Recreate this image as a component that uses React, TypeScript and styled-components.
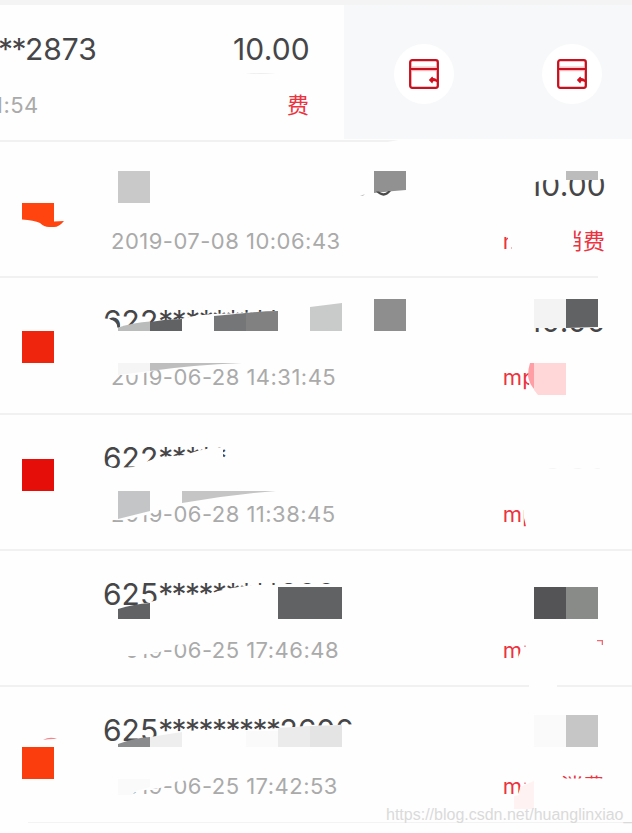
import React from 'react';
import styled, { createGlobalStyle } from 'styled-components';

const GlobalStyle = createGlobalStyle`
  * { box-sizing: border-box; }
  body { margin: 0; background: #fefefe; font-family: Inter, 'Noto Sans CJK SC', sans-serif; }
`;

const Screen = styled.main`
  position: relative;
  width: 632px;
  height: 833px;
  overflow: hidden;
  background: #fefefe;
`;

const TopStrip = styled.div`
  height: 5px;
  background: #f4f4f5;
`;

const Row = styled.section<{ $height: number; $last?: boolean }>`
  position: relative;
  display: flex;
  height: ${(p) => p.$height}px;
  border-bottom: ${(p) => (p.$last ? '1px solid #f3f3f3' : '2px solid #f1f1f1')};
`;

const Details = styled.div<{ $swiped?: boolean }>`
  display: flex;
  flex-direction: column;
  flex: none;
  width: ${(p) => (p.$swiped ? 344 : 632)}px;
  padding: ${(p) => (p.$swiped ? '26px 34px 0 0' : '25px 26px 0 103px')};
`;

const Line = styled.div<{ $secondary?: boolean }>`
  display: flex;
  justify-content: space-between;
  align-items: center;
  height: ${(p) => (p.$secondary ? 30 : 36)}px;
  margin-top: ${(p) => (p.$secondary ? 23 : 0)}px;
  white-space: pre;
`;

const CardNumber = styled.span<{ $swiped?: boolean }>`
  display: flex;
  margin-left: ${(p) => (p.$swiped ? -2 : 0)}px;
  font-size: 30px;
  line-height: 36px;
  color: #464648;
`;

const Digits = styled.span`
  letter-spacing: 0;
`;

const Stars = styled.span`
  letter-spacing: -1.55px;
`;

const Amount = styled.span`
  font-size: 30px;
  line-height: 36px;
  letter-spacing: 0.2px;
  color: #464648;
`;

const Time = styled.time<{ $swiped?: boolean }>`
  margin-left: ${(p) => (p.$swiped ? -6 : 8)}px;
  font-size: 22px;
  line-height: 30px;
  letter-spacing: 0.48px;
  color: #aaaaaa;
`;

const Kind = styled.span`
  margin-right: 1px;
  font-size: 22px;
  line-height: 30px;
  letter-spacing: 0.1px;
  color: #ec3340;
`;

const Actions = styled.div`
  display: flex;
  align-items: center;
  justify-content: space-between;
  width: 288px;
  height: 134px;
  padding: 3px 30px 0 50px;
  background: #f6f8fa;
`;

const ActionButton = styled.button`
  display: grid;
  place-items: center;
  width: 60px;
  height: 60px;
  padding: 0;
  border: 0;
  border-radius: 50%;
  background: #fff;
`;

const Mosaic = styled.svg`
  position: absolute;
  left: 0;
  top: 0;
  width: 632px;
  height: 100%;
  overflow: visible;
`;

const Watermark = styled.div`
  position: absolute;
  left: 386px;
  top: 805px;
  font-family: 'Liberation Sans', Arial, sans-serif;
  font-size: 16px;
  line-height: 20px;
  white-space: nowrap;
  color: #dadada;
`;

const CardIcon = () => (
  <svg width="30" height="30" viewBox="0 0 30 30" fill="none" stroke="#c8101e" strokeWidth="2.3">
    <rect x="1.2" y="1.2" width="27.6" height="27.6" rx="2" />
    <path d="M1 10h28" strokeWidth="2" />
    <path d="M2 8.1h26M2 11.7h26" stroke="#f0a8ae" strokeWidth="1" />
    <path d="M19.8 21l3.4-3.5 1 1.6c2 .2 3.6 1 5 2.8v2c-1.5-1.2-3-1.7-5-1.6l-1 2.2z" fill="#d0101e" stroke="none" />
  </svg>
);

type Piece = [fill: string, d: string];
const W = '#fefefe';
const block = (x: number, y: number, w = 32, h = 32) => `M${x} ${y}h${w}v${h}h${-w}z`;

interface Transaction {
  top: number;
  height: number;
  prefix: string;
  stars: string;
  suffix: string;
  amount: string;
  time: string;
  kind: string;
  pieces: Piece[];
}

const transactions: Transaction[] = [
  {
    top: 142, height: 136, prefix: '', stars: '', suffix: '', amount: '10.00',
    time: '2019-07-08 10:06:43', kind: 'mpos消费',
    pieces: [
      ['#c9c9c9', block(118, 171)],
      ['#919191', 'M374 171h32v19l-12 1-20 2z'],
      ['#4a4a4a', 'M376 191.5Q384 200 391 191l-2.8-.1Q384 195 379 191.6z'],
      ['#c4c4c4', 'M360 196l5-2-2 2z'],
      [W, 'M528 165H610V179L546 180 540 181 528 184z'],
      ['#bcbcbc', block(566, 171, 32, 9)],
      ['#ff440f', 'M22 203h32v18.500l10-.5q-5 6-10 6h-5q-5 0-9-4-6-3-18-3.500z'],
      [W, 'M507 225H573V234L575 242 570 254H512L507 235z'],
      ['#f7b5ba', 'M511 247h1v2h-1z'],
      [W, 'M598 275h34v4h-34z'],
    ],
  },
  {
    top: 278, height: 137, prefix: '622', stars: '*********', suffix: '', amount: '10.00',
    time: '2019-06-28 14:31:45', kind: 'mpos消费',
    pieces: [
      [W, 'M100 319q14-3 18 9l34-6 28-3 14-3 18-2 30-1 50-3h40v30H100z'],
      ['#4a4a4a', 'M112 318q8 1 8 9l-2 1q-1-6-6-8z'],
      ['#babcbc', 'M118 327.500q16-5 32-6V331h-32z'],
      ['#616264', 'M150 322q16-3 32-3v12h-32z'],
      ['#757678', 'M214 316l32-3v18h-32z'],
      ['#818181', 'M246 313q16-2 32-2v20h-32z'],
      ['#c9caca', 'M310 307l32-4v28h-32z'],
      ['#8e8e8e', block(374, 299)],
      [W, 'M525 299h82v29h-82z'],
      ['#f3f3f3', 'M534 299h32v29h-32z'],
      ['#616264', 'M566 299h32v28l-32 1z'],
      ['#ef260d', block(22, 331)],
      [W, 'M108 363h55v6l-14 3-13 3h-28z'],
      ['#f5f5f5', 'M118 363h32v8l-32 4z'],
      ['#bebebe', 'M150 363h92q-50 2-92 8z'],
      [W, 'M530 361h78v36h-76l-3-9z'],
      ['#ff9ea4', 'M530 363h4v26q-5-6-6-13 0-7 2-13z'],
      ['#ffd7d8', 'M534 363h32v32h-28l-4-5z'],
    ],
  },
  {
    top: 415, height: 136, prefix: '622', stars: '*****', suffix: '', amount: '10.00',
    time: '2019-06-28 11:38:45', kind: 'mpos消费',
    pieces: [
      [W, 'M102 464l11 4 20-1 10-4 16-6 26-2 12-4 14-3 12-1v25H102z'],
      [W, block(528, 442, 80, 31)],
      ['#f5f5f5', 'M548 468q5 2 9 0M573 468q5 2 9 0M594 468q4 2 7 0'],
      ['#e50e08', block(22, 459)],
      [W, 'M108 491h54v18l-12 5-16 4-10 2h-16z'],
      ['#c4c5c7', 'M118 491h32v20l-32 8z'],
      ['#c5c5c5', 'M182 491h94q-48 4-94 12z'],
      [W, 'M523 500l1 18 2 8h82v-30z'],
    ],
  },
  {
    top: 551, height: 136, prefix: '625', stars: '*********', suffix: '200', amount: '10.00',
    time: '2019-06-25 17:46:48', kind: 'mpos消费',
    pieces: [
      [W, 'M118 609l28-6 12-3 6-4 46-2 8-3 14-3 20-3h30V584H342V618H118z'],
      ['#616264', 'M118 609q16-5 32-6v16h-32z'],
      ['#616264', block(278, 587, 64, 32)],
      [W, block(528, 575, 82, 45)],
      ['#545456', block(534, 587)],
      ['#898b89', block(566, 587)],
      [W, 'M108 638h90l-8 6-16 1-8 4-6 3-15 2-5 2h-12v4h-20z'],
      [W, 'M521 638H608V664H520L518 657 521 651z'],
      ['#ed6b75', 'M597 640h6v5h-1.300v-3.700h-4.700z'],
      ['#f3a0a7', 'M524 645.500h2v1.500h-2z'],
      [W, 'M529 684h28v5h-28z'],
    ],
  },
  {
    top: 687, height: 136, prefix: '625', stars: '*********', suffix: '2600', amount: '',
    time: '2019-06-25 17:42:53', kind: 'mpos消费',
    pieces: [
      [W, 'M118 747l26-6 12-4 8-5 40-2h50l24-2 32-2 50-2v24H118z'],
      ['#8a8b8d', 'M118 744q16-6 32-7v10h-32z'],
      ['#eeeeee', 'M150 737l32-5v15h-32z'],
      ['#fafafa', block(246, 731, 32, 16)],
      ['#ebebeb', 'M278 728l32-2v21h-32z'],
      ['#e4e4e4', 'M310 726l32-1v22h-32z'],
      ['#f4838b', 'M43 740q7-4 14-1-7-.5-14 1z'],
      ['#fb3d0d', block(22, 747)],
      ['#fafafa', block(534, 715)],
      ['#c6c6c6', block(566, 715)],
      [W, 'M108 772h90l-8 8-16 2-8 4-6 2-15 2-5 2h-7v4h-25z'],
      ['#fafafa', 'M118 779h32v8l-14 4-4 4h-14z'],
      [W, 'M521 787V772H560V778.500H608V802H520L518 794z'],
      ['#fff2f2', 'M520 787l14-6v28h-20v-13l5-1z'],
      ['#f3a0a7', 'M524 782.500h2v1.500h-2z'],
      [W, block(0, 820, 28, 4)],
    ],
  },
];

export default function App() {
  return (
    <>
      <GlobalStyle />
      <Screen>
        <TopStrip />
        <Row $height={137}>
          <Details $swiped>
            <Line>
              <CardNumber $swiped><Stars>**</Stars><Digits>2873</Digits></CardNumber>
              <Amount>10.00</Amount>
            </Line>
            <Line $secondary>
              <Time $swiped>1:54</Time>
              <Kind>费</Kind>
            </Line>
          </Details>
          <Actions>
            <ActionButton aria-label="card"><CardIcon /></ActionButton>
            <ActionButton aria-label="card"><CardIcon /></ActionButton>
          </Actions>
          <Mosaic viewBox="0 5 632 137" preserveAspectRatio="xMinYMin slice">
            <path d="M246 74q14-2 30 0z" fill="#eeeeee" />
            <path d="M404 139H632V143H382z" fill={W} />
          </Mosaic>
        </Row>
        {transactions.map((t, i) => (
          <Row key={t.top} $height={t.height} $last={i === transactions.length - 1}>
            <Details>
              <Line>
                <CardNumber>
                  <Digits>{t.prefix}</Digits>
                  <Stars>{t.stars}</Stars>
                  <Digits>{t.suffix}</Digits>
                </CardNumber>
                <Amount>{t.amount}</Amount>
              </Line>
              <Line $secondary>
                <Time>{t.time}</Time>
                <Kind>{t.kind}</Kind>
              </Line>
            </Details>
            <Mosaic viewBox={`0 ${t.top} 632 ${t.height}`} preserveAspectRatio="xMinYMin slice">
              {t.pieces.map(([fill, d], n) => <path key={n} d={d} fill={fill} />)}
            </Mosaic>
          </Row>
        ))}
        <Watermark>https://blog.csdn.net/huanglinxiao_</Watermark>
      </Screen>
    </>
  );
}
